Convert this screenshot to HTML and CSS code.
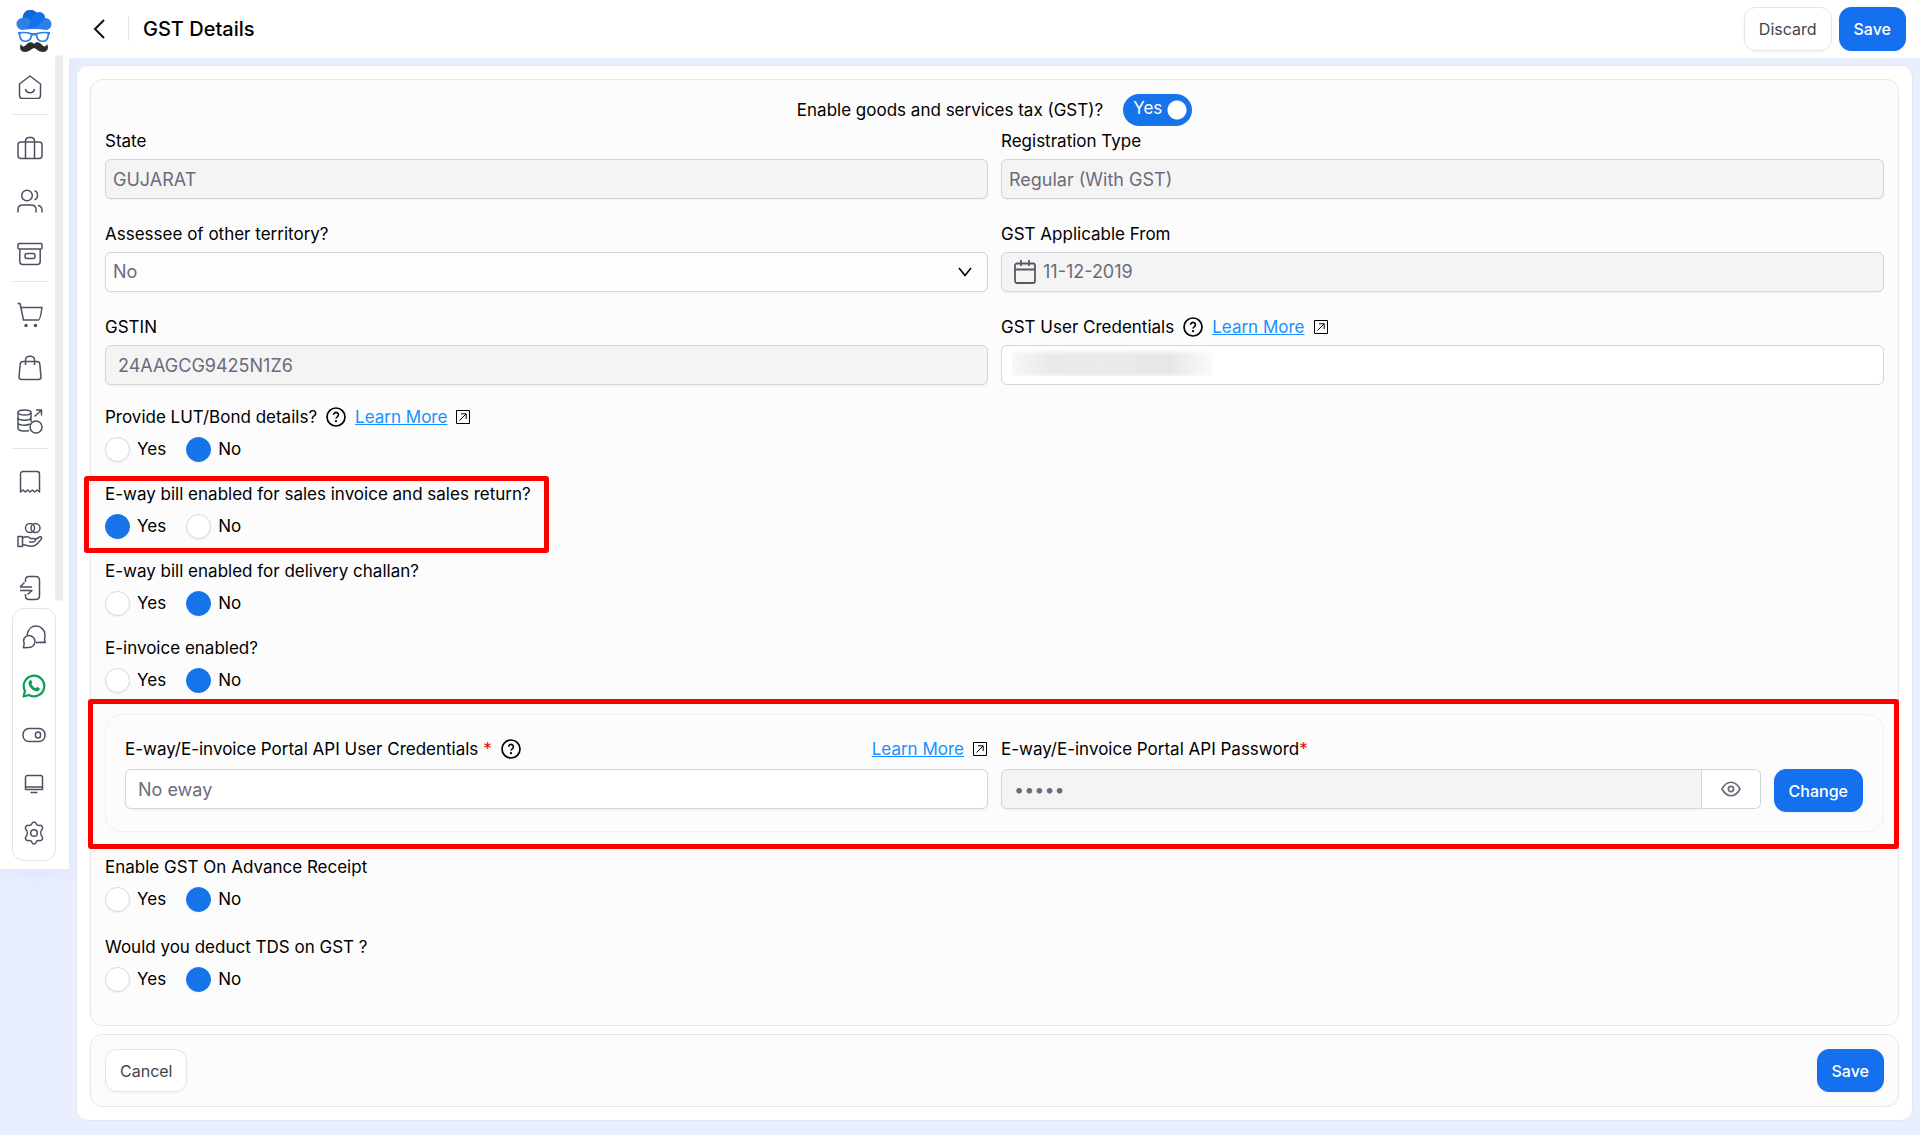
FILE: index.html
```html
<!DOCTYPE html>
<html lang="en">
<head>
<meta charset="utf-8">
<meta name="viewport" content="width=device-width, initial-scale=1">
<title>GST Details</title>
<link rel="stylesheet" href="styles.css">
</head>
<body>
<svg class="sprite" aria-hidden="true">
  <symbol id="help" viewBox="0 0 20 20"><circle cx="10" cy="10" r="9" fill="none" stroke="currentColor" stroke-width="1.7"/><path d="M7.6 7.8a2.4 2.4 0 1 1 3.7 2c-.8.5-1.3.9-1.3 1.8" fill="none" stroke="currentColor" stroke-width="1.6"/><circle cx="10" cy="14.2" r="1.1" fill="currentColor"/></symbol>
  <symbol id="external" viewBox="0 0 16 16"><path d="M1.500 1.500h13v13h-13zM4.500 11.500l6.500-6.500M6 4.800h5.200V10" fill="none" stroke="currentColor" stroke-width="1"/></symbol>
</svg>
<div class="app">
  <aside class="sidebar">
    <a class="logo" href="#" aria-label="Home page">
      <svg width="36" height="44" viewBox="0 0 36 44">
        <path d="M6 21a6 6 0 0 1-5.500-6c0-3.500 3-6 6-6C7 4 10 1 14 1c3 0 5 1 6.500 2.500C26 2 29 5 29 9c4 0 6.500 3 6.500 6s-2 5.500-5 6Q18 19 6 21z" fill="#2e7fe8"/>
        <path d="M7 9C7 4 10 1 14 1s7 2 8 5c-5 1-6 5-6 7C14 9 10 8 7 9z" fill="#0d68dc"/>
        <path d="M8 20C14 18 15 11 17 7c3-4 12-4 12 2-4 6-8 10-13 10z" fill="#1672ea"/>
        <path d="M2 23q8-1 14 1h4q6-2 14-1v2l-1 1c0 4-2 7-6 7-4 0-7-2-7-6-1-1-3-1-4 0 0 4-3 6-7 6-4 0-6-3-6-7l-1-1z" fill="#2e7fe8"/>
        <path d="M4.500 24.500q5.500-.8 10 1c0 4.500-2.500 6-5.500 6s-4.500-3-4.500-7zM31.500 24.500q-5.500-.8-10 1c0 4.500 2.500 6 5.500 6s4.500-3 4.500-7z" fill="#fff"/>
        <path d="M18 35c2-3 6-2 8 1 2 2 4 2 5-1 2 3 1 8-4 8-4 0-6-3-9-4-3 1-5 4-9 4-5 0-6-5-4-8 1 3 3 3 5 1 2-3 6-4 8-1z" fill="#2b2d2f"/>
      </svg>
    </a>
    <nav class="menu" aria-label="Main">
      <div class="menu-list">
        <a href="#" aria-label="Home"><svg width="24" height="24" viewBox="0 0 24 24"><path d="M1.500 9 12 1l10.500 8v11.500a3 3 0 0 1-3 3h-15a3 3 0 0 1-3-3zM7.500 14c1 5 8 5 9 0"/></svg></a>
        <hr>
        <a href="#" aria-label="Business"><svg width="26" height="24" viewBox="0 0 26 24"><rect x="1" y="6" width="24" height="16.500" rx="3"/><path d="M8.500 22V4.500a3.500 3.500 0 0 1 3.500-3h2a3.500 3.500 0 0 1 3.500 3V22"/></svg></a>
        <a href="#" aria-label="Contacts"><svg width="26" height="24" viewBox="0 0 26 24"><circle cx="10" cy="6.500" r="5.300"/><path d="M1 23.500v-3c0-3 2-4.500 5-4.500h8c3 0 5 1.500 5 4.500v3M17.500 1.700c4 1 4 8 0 9M21 16.500c3 .5 4 2 4 4.500v2.500"/></svg></a>
        <a href="#" aria-label="Products"><svg width="26" height="24" viewBox="0 0 26 24"><rect x="1" y="1.500" width="24" height="5.500" rx="1"/><path d="M2.800 7v12.500a3 3 0 0 0 3 3h14.400a3 3 0 0 0 3-3V7"/><rect x="8" y="11.500" width="10" height="5" rx="2"/></svg></a>
        <hr>
        <a href="#" aria-label="Sales"><svg width="26" height="26" viewBox="0 0 26 26"><path d="M.5 1.500H3l3.500 16.500h15c1.500 0 3-9 3.500-12.500H4"/><circle class="dot" cx="9" cy="23.500" r="1.700"/><circle class="dot" cx="18.500" cy="23.500" r="1.700"/></svg></a>
        <a href="#" aria-label="Purchase"><svg width="24" height="26" viewBox="0 0 24 26"><path d="M5 6.500h14c2 0 2.600 1 2.800 2.500L23 22c0 2-1 2.500-2.500 2.500h-17C2 24.500 1 24 1 22L2.200 9C2.400 7.500 3 6.500 5 6.500zM7.500 10V5c0-5 9-5 9 0v5"/></svg></a>
        <a href="#" aria-label="Transactions"><svg width="26" height="26" viewBox="0 0 26 26"><ellipse cx="7.500" cy="4.500" rx="6.500" ry="2.500"/><path d="M1 4.500V20c0 2.500 5 4 11 2.500M14 4.500V14M1 9.500c0 3.500 13 3.500 13 0M1 14.500c0 3 8 3.500 12 1.500M17.500 8.500 24 2.500M19 2h5.500v5.500"/><circle cx="19" cy="19" r="6"/></svg></a>
        <hr>
        <a href="#" aria-label="Receipts"><svg width="22" height="24" viewBox="0 0 22 24"><path d="M1.500 22V4a2.500 2.500 0 0 1 2.500-2.500h14A2.500 2.500 0 0 1 20.500 4v18l-2.500-2-2.300 2-2.300-2-2.400 2-2.400-2-2.300 2-2.300-2z"/></svg></a>
        <a href="#" aria-label="Payments"><svg width="26" height="26" viewBox="0 0 26 26"><circle cx="13" cy="6" r="4.500"/><circle cx="18.500" cy="6" r="4.500"/><path d="M1 14.500h4.500v10H1zM5.500 16c4-2 6-2 8 .5h3.500c2 0 2 3.500-1 3.500h-4M17.500 18l5-3c2-.7 2.800 1 1.500 2.500-5 6-7 7.500-12 6.500l-6.500-1.500"/></svg></a>
        <a href="#" aria-label="Log out"><svg width="22" height="26" viewBox="0 0 22 26"><path d="M6.500 7V5c0-2.500 1-3.500 3.500-3.500h6.500c3 0 4 1 4 4v15c0 3-1 4-4 4H10c-2.500 0-3.500-1-3.500-3.500v-2M1 12h12M5.500 7.500 1 12M1 15.500h12l-4.500 4"/></svg></a>
      </div>
    </nav>
    <nav class="tools" aria-label="Tools">
      <a href="#" aria-label="Chat"><svg width="24" height="24" viewBox="0 0 24 24"><path d="M5 10C6 4 10 1 14 1c5 0 9 4 9 9 0 3-.5 4-.5 5l.8 2.500-3.300-.3-6 .3M7 10.500a6 6 0 1 1 0 12l-5.500.2.700-4.500C.5 14.500 3 10.500 7 10.500z"/></svg></a>
      <a href="#" aria-label="WhatsApp"><svg class="whatsapp" width="24" height="24" viewBox="0 0 24 24"><path d="M1.500 22.500 3 17A10.300 10.300 0 1 1 7 21z"/><path class="phone" d="M8 6.300c.6-.4 1.200-.2 1.500.4l.8 1.900c.1.500-.6 1.100-.9 1.600 1 1.900 2.300 3.100 4.300 4 .6-.5 1-1.400 1.600-1.200l2.100 1c.8.500 0 2.400-.9 2.900-3.600 2-10-3.700-10-7.700 0-1.200.6-2.300 1.500-2.900z"/></svg></a>
      <a href="#" aria-label="Toggle"><svg width="24" height="16" viewBox="0 0 24 16"><rect x="1" y="1.500" width="22" height="13" rx="6"/><rect x="13.500" y="5" width="5" height="6" rx="2.500"/></svg></a>
      <a href="#" aria-label="Display"><svg width="20" height="20" viewBox="0 0 20 20"><path d="M3.500 1.500h13a2 2 0 0 1 2 2v12h-17v-12a2 2 0 0 1 2-2zM1.500 13h17M6.500 18.500h7"/></svg></a>
      <a href="#" aria-label="Settings"><svg width="22" height="24" viewBox="0 0 22 24"><path d="M9 2.500c.8-2 3.200-2 4 0 .6 1.700 1.600 2.200 3.300 1.900 2.600-.5 4.300 2.300 2.700 4.200-1.700 1.900-1.700 4.900 0 6.800 1.600 1.900-.1 4.700-2.700 4.200-1.700-.3-2.700.2-3.300 1.900-.8 2-3.200 2-4 0-.6-1.700-1.600-2.200-3.300-1.900-2.600.5-4.300-2.300-2.700-4.200 1.700-1.900 1.700-4.900 0-6.800-1.600-1.900.1-4.700 2.700-4.200 1.700.3 2.700-.2 3.300-1.900z"/><circle cx="11" cy="12" r="3.300"/></svg></a>
    </nav>
  </aside>

  <div class="page">
    <header class="topbar">
      <button class="back" type="button" aria-label="Back"><svg width="12" height="20" viewBox="0 0 12 20"><path d="M11 1 2 10l9 9" fill="none" stroke="currentColor" stroke-width="2"/></svg></button>
      <h1>GST Details</h1>
      <button class="btn" type="button">Discard</button>
      <button class="btn primary" type="submit" form="gst-form">Save</button>
    </header>

    <main>
      <form class="card" id="gst-form">
        <div class="panel">
          <div class="enable">
            <label for="enable-gst">Enable goods and services tax (GST)?</label>
            <span class="switch"><input type="checkbox" id="enable-gst" role="switch" checked><span aria-hidden="true">Yes</span></span>
          </div>

          <div class="fields">
            <div class="field">
              <div class="label-row"><label for="state">State</label></div>
              <input class="control" id="state" value="GUJARAT" disabled>
            </div>
            <div class="field">
              <div class="label-row"><label for="reg-type">Registration Type</label></div>
              <input class="control" id="reg-type" value="Regular (With GST)" disabled>
            </div>
            <div class="field">
              <div class="label-row"><label for="territory">Assessee of other territory?</label></div>
              <div class="select">
                <select class="control" id="territory"><option>No</option><option>Yes</option></select>
                <svg width="14" height="10" viewBox="0 0 14 10"><path d="m1 1 6 7.500L13 1" fill="none" stroke="currentColor" stroke-width="1.600"/></svg>
              </div>
            </div>
            <div class="field">
              <div class="label-row"><label for="from">GST Applicable From</label></div>
              <div class="control date">
                <svg width="22" height="24" viewBox="0 0 22 24"><path d="M3 3.500h16a2 2 0 0 1 2 2V21a2 2 0 0 1-2 2H3a2 2 0 0 1-2-2V5.500a2 2 0 0 1 2-2zM1 9.500h20M7 0v6M15 0v6" fill="none" stroke="currentColor" stroke-width="1.800"/></svg>
                <input id="from" value="11-12-2019" disabled>
              </div>
            </div>
            <div class="field">
              <div class="label-row"><label for="gstin">GSTIN</label></div>
              <input class="control wide" id="gstin" value="24AAGCG9425N1Z6" disabled>
            </div>
            <div class="field">
              <div class="label-row">
                <label for="gst-user">GST User Credentials</label>
                <svg class="help"><use href="#help"/></svg>
                <a class="learn" href="#">Learn More</a>
                <svg class="external"><use href="#external"/></svg>
              </div>
              <input class="control masked" id="gst-user">
            </div>
          </div>

          <div class="question" role="radiogroup" aria-labelledby="q-lut">
            <div class="label-row">
              <span id="q-lut">Provide LUT/Bond details?</span>
              <svg class="help"><use href="#help"/></svg>
              <a class="learn" href="#">Learn More</a>
              <svg class="external"><use href="#external"/></svg>
            </div>
            <div class="options">
              <label><input type="radio" name="lut">Yes</label>
              <label><input type="radio" name="lut" checked>No</label>
            </div>
          </div>
          <div class="question highlighted" role="radiogroup" aria-labelledby="q-sales">
            <div class="label-row"><span id="q-sales">E-way bill enabled for sales invoice and sales return?</span></div>
            <div class="options">
              <label><input type="radio" name="sales" checked>Yes</label>
              <label><input type="radio" name="sales">No</label>
            </div>
          </div>
          <div class="question" role="radiogroup" aria-labelledby="q-challan">
            <div class="label-row"><span id="q-challan">E-way bill enabled for delivery challan?</span></div>
            <div class="options">
              <label><input type="radio" name="challan">Yes</label>
              <label><input type="radio" name="challan" checked>No</label>
            </div>
          </div>
          <div class="question" role="radiogroup" aria-labelledby="q-einv">
            <div class="label-row"><span id="q-einv">E-invoice enabled?</span></div>
            <div class="options">
              <label><input type="radio" name="einv">Yes</label>
              <label><input type="radio" name="einv" checked>No</label>
            </div>
          </div>

          <section class="portal highlighted">
            <div class="field">
              <div class="label-row">
                <label for="api-user">E-way/E-invoice Portal API User Credentials <span class="required">*</span></label>
                <svg class="help"><use href="#help"/></svg>
                <a class="learn push" href="#">Learn More</a>
                <svg class="external"><use href="#external"/></svg>
              </div>
              <input class="control wide" id="api-user" value="No eway">
            </div>
            <div class="field">
              <div class="label-row"><label for="api-pass">E-way/E-invoice Portal API Password<span class="required">*</span></label></div>
              <div class="password-row">
                <div class="password">
                  <input class="control wide" type="password" id="api-pass" value="12345" disabled>
                  <button class="eye" type="button" aria-label="Show password"><svg width="20" height="16" viewBox="0 0 20 16"><path d="M1 8c5-9 13-9 18 0-5 9-13 9-18 0z"/><circle cx="10" cy="8" r="2.600"/></svg></button>
                </div>
                <button class="btn primary" type="button">Change</button>
              </div>
            </div>
          </section>

          <div class="question spaced" role="radiogroup" aria-labelledby="q-adv">
            <div class="label-row"><span id="q-adv">Enable GST On Advance Receipt</span></div>
            <div class="options">
              <label><input type="radio" name="adv">Yes</label>
              <label><input type="radio" name="adv" checked>No</label>
            </div>
          </div>
          <div class="question spaced" role="radiogroup" aria-labelledby="q-tds">
            <div class="label-row"><span id="q-tds">Would you deduct TDS on GST ?</span></div>
            <div class="options">
              <label><input type="radio" name="tds">Yes</label>
              <label><input type="radio" name="tds" checked>No</label>
            </div>
          </div>
        </div>

        <footer class="panel actions">
          <button class="btn" type="button">Cancel</button>
          <button class="btn primary" type="submit">Save</button>
        </footer>
      </form>
    </main>
  </div>
</div>
</body>
</html>
```
FILE: styles.css
```css
* { box-sizing: border-box; }
body {
  margin: 0;
  background: #e9effe;
  color: #000;
  font: 500 17px/24px Inter, "Liberation Sans", sans-serif;
}
button, input, select { font: inherit; }
svg { flex: none; display: block; }
.sprite { position: absolute; width: 0; height: 0; }

.app { display: flex; align-items: flex-start; min-height: 100vh; }

/* Sidebar */
.sidebar {
  flex: none;
  width: 69px;
  padding-bottom: 8px;
  background: #fff;
  box-shadow: 0 4px 24px rgba(40, 60, 130, .06);
}
.sidebar a { display: grid; place-items: center; color: #4b5160; }
.sidebar svg { fill: none; stroke: currentColor; stroke-width: 1.5; stroke-linejoin: round; }
.sidebar .logo { height: 55px; padding: 6px 2px 0 0; }
.sidebar .logo svg { stroke: none; }
.menu { display: flex; justify-content: space-between; padding: 0 6px 0 0; }
.menu::after { content: ""; width: 8px; border-radius: 4px; background: #ececec; }
.menu-list { width: 60px; height: 546px; padding-top: 5px; margin-right: -5px; overflow: hidden; }
.menu-list a { height: 53px; }
.menu hr { width: 36px; height: 1px; margin: 1px auto 6px; border: 0; background: #e4e4e6; }
.menu .dot { fill: currentColor; stroke: none; }
.tools {
  width: 44px;
  margin: 7px 13px 0 12px;
  padding: 3px 0;
  border: 1px solid #e4e4e6;
  border-radius: 12px;
}
.tools a { height: 49px; }
.tools .whatsapp { color: #0d9f56; stroke-width: 2.2; }
.tools .phone { fill: currentColor; stroke: none; }

/* Header */
.page { flex: 1; min-width: 0; }
.topbar {
  display: flex;
  align-items: center;
  gap: 7px;
  height: 58px;
  padding: 0 14px 0 20px;
  background: #fff;
}
.topbar h1 {
  flex: 1;
  margin: 0 0 0 12px;
  padding-left: 14px;
  border-left: 1px solid #e4e4e6;
  font-size: 20px;
  font-weight: 500;
}
.back { padding: 0 4px; border: 0; background: none; color: #111; }

.btn {
  flex: none;
  height: 44px;
  padding: 0 14px;
  border: 1px solid #e6e6e9;
  border-radius: 12px;
  background: #fff;
  color: #3f444d;
  font-size: 16px;
  font-weight: 400;
  box-shadow: 0 1px 3px rgba(0, 0, 0, .05);
}
.btn.primary { border-color: #1570ef; background: #1570ef; color: #fff; font-weight: 500; }

/* Form */
main { padding: 7px 7px 14px; }
.card {
  display: grid;
  gap: 8px;
  padding: 13px;
  border: 1px solid #e4e7f0;
  border-radius: 12px;
  background: #fff;
  font-weight: 400;
}
.panel {
  padding: 14px 14px 33px;
  border: 1px solid #e8e8eb;
  border-radius: 12px;
  background: #fcfcfd;
}
.enable { display: flex; justify-content: center; align-items: center; gap: 20px; height: 32px; margin-bottom: 3px; }
.switch { position: relative; }
.switch input {
  appearance: none;
  display: block;
  width: 69px;
  height: 32px;
  margin: 0;
  border-radius: 16px;
  background: radial-gradient(circle at 54px 16px, #fff 9px, #1773ea 10px);
}
.switch span { position: absolute; left: 10px; top: 2px; color: #fff; pointer-events: none; }

.fields { display: grid; grid-template-columns: 1fr 1fr; gap: 23px 13px; }
.label-row { display: flex; align-items: center; height: 24px; white-space: nowrap; }
.help { width: 20px; height: 20px; margin: 0 9px; }
.external { width: 16px; height: 16px; margin-left: 8px; }
.learn { color: #1890ff; text-decoration: underline; }
.push { margin-left: auto; }
.required { color: #f00; }

.control {
  display: block;
  width: 100%;
  height: 40px;
  margin-top: 6px;
  padding: 0 7px;
  border: 1px solid #d4d5db;
  border-radius: 6px;
  background: #fff;
  color: #6b6b7b;
  font-weight: 400;
  font-size: 18px;
  box-shadow: 0 1px 2px rgba(0, 0, 0, .05);
}
.control:disabled, .date { background: #f4f4f4; }
.wide { padding: 0 12px; }
.masked {
  background: linear-gradient(90deg, #f7f7f8, #e8e8ea 20%, #ebebed 45%, #e6e6e8 78%, #fbfbfb) 10px 4px / 201px 26px no-repeat #fff;
  box-shadow: inset 0 6px 4px #fff, inset 0 -8px 4px #fff;
}
.select { display: grid; align-items: center; }
.select > * { grid-area: 1 / 1; }
.select select { appearance: none; background: #fdfdfd; }
.select svg { justify-self: end; margin: 6px 16px 0; pointer-events: none; }
.date { display: flex; align-items: center; gap: 7px; padding: 0 12px; color: #555b66; }
.date input { flex: 1; min-width: 0; padding: 0; border: 0; background: none; color: #6b6b7b; }

.question { margin-top: 20px; }
.question.spaced { margin-top: 23px; }
.options { display: flex; gap: 20px; margin-top: 8px; }
.options label { display: flex; align-items: flex-start; gap: 7px; height: 25px; }
.options input {
  appearance: none;
  width: 25px;
  height: 25px;
  margin: 0;
  border: 1px solid #d9d9d9;
  border-radius: 50%;
  background: #fff;
  box-shadow: 0 1px 2px rgba(0, 0, 0, .06);
}
.options input:checked { border-color: #1773ea; background: #1773ea; }

/* Red call-out frames drawn over the form */
.highlighted { position: relative; }
.highlighted::after {
  content: "";
  position: absolute;
  inset: -16px -16px -18px -18px;
  border: 5px solid #f00;
  border-radius: 3px;
  pointer-events: none;
}
.question.highlighted { width: fit-content; }
.question.highlighted::after { inset: -6px -18px -14px -21px; }

.portal {
  display: grid;
  grid-template-columns: 863fr 862fr;
  gap: 13px;
  margin-top: 21px;
  padding: 22px 20px 19px 19px;
  border: 1px solid #f0f0f2;
  border-radius: 16px;
}
.password-row { display: flex; align-items: flex-start; gap: 13px; margin-top: 8px; }
.password-row .btn { height: 43px; }
.portal .control { margin-top: 8px; }
.portal .password-row .control { margin: 0; border-radius: 6px 0 0 6px; }
.password { display: flex; flex: 1; min-width: 0; }
.eye {
  display: grid;
  place-items: center;
  flex: none;
  width: 59px;
  height: 40px;
  padding: 0;
  border: 1px solid #d4d5db;
  border-left: 0;
  border-radius: 0 6px 6px 0;
  background: #fff;
  color: #6b6b7b;
}
.eye svg { fill: none; stroke: currentColor; stroke-width: 1.7; }

.actions { display: flex; justify-content: space-between; padding: 14px; }
.actions .btn { height: 43px; }
```
